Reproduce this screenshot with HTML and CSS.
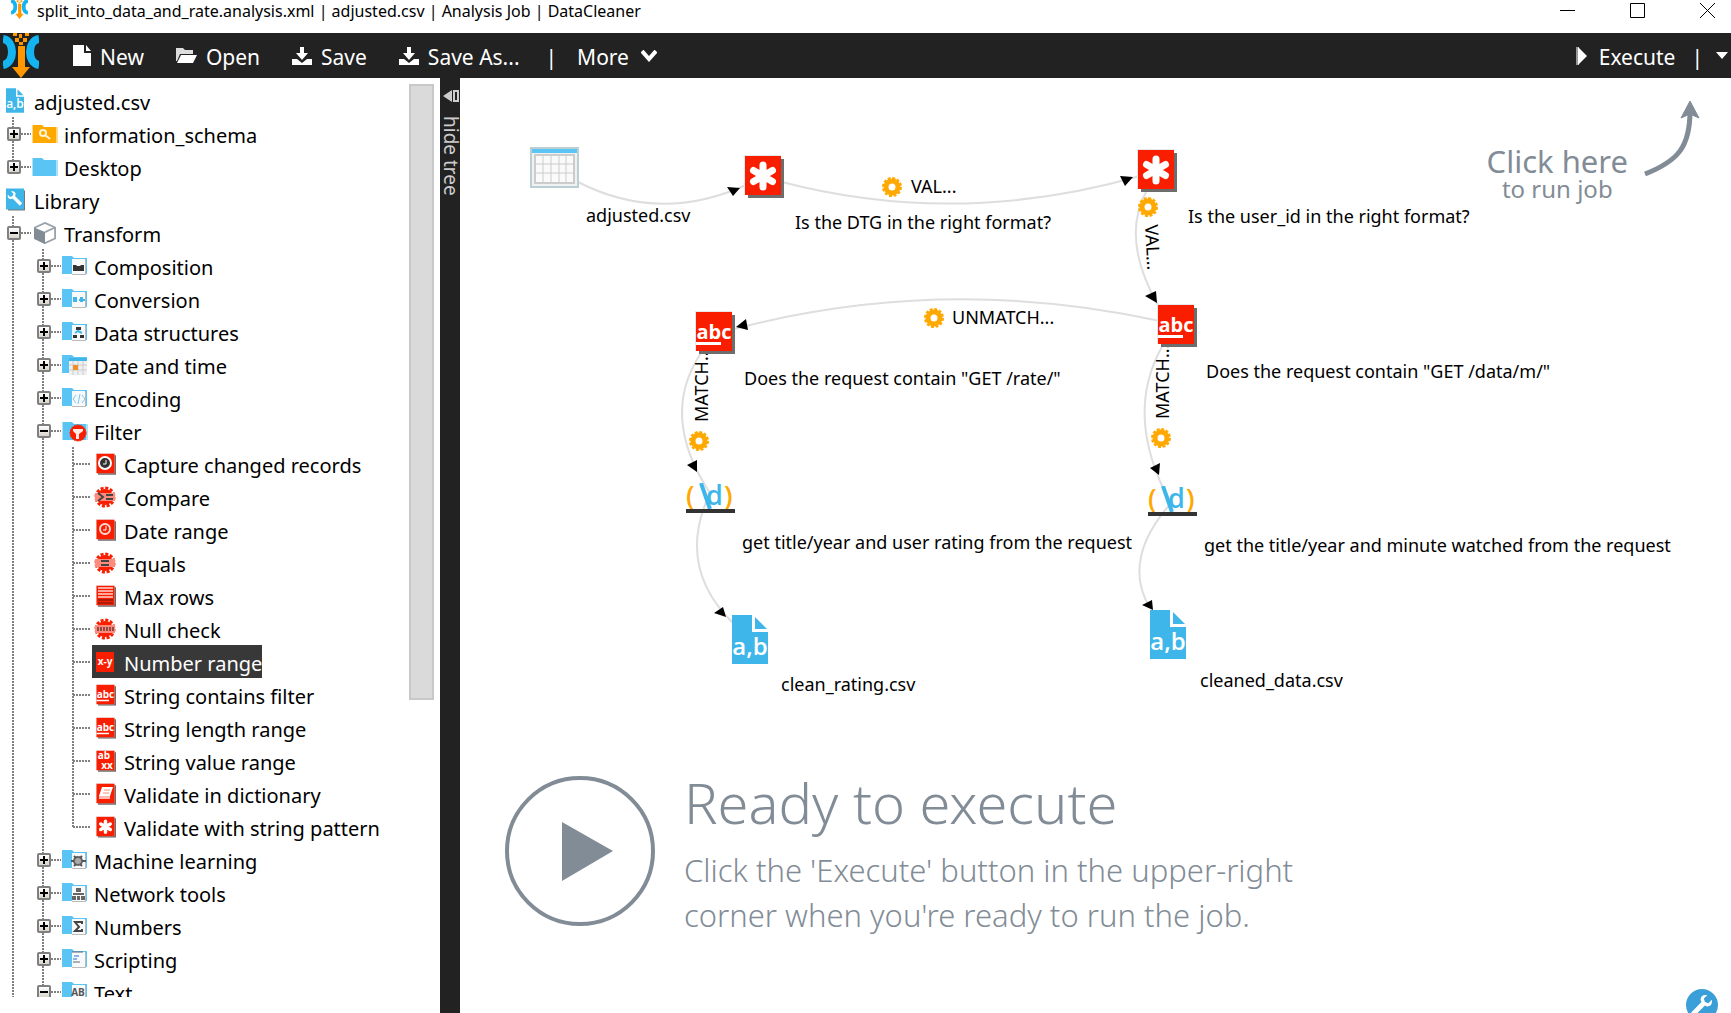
FILE: index.html
```
<!DOCTYPE html>
<html lang="en">
<head>
<meta charset="utf-8">
<title>split_into_data_and_rate.analysis.xml | adjusted.csv | Analysis Job | DataCleaner</title>
<link rel="stylesheet" href="styles.css">
</head>
<body>
<svg class="sprite" aria-hidden="true">
  <symbol id="logo" viewBox="0 0 36 45">
    <path d="M0 6c12 2 12 24 0 26M36 6c-12 2-12 24 0 26" fill="none" stroke="#14b4f0" stroke-width="8"/>
    <path d="M15 13h7v21h5l-9 11-9-11h6zM10 0h4v3h-4zM16 1h3v4h-3zM22 0h4v3h-4zM12 5h4v4h-4zM20 5h4v4h-4zM16 9h4v3h-4z" fill="#ff9800"/>
  </symbol>
  <symbol id="folder" viewBox="0 0 26 20">
    <path d="M1 1h9l2 2h13v16H1z" fill="#5ac5f4"/><path d="M24 3h2v16h-2zM0 1h1v18H0z" fill="#aee0f7"/>
  </symbol>
  <symbol id="tile" viewBox="0 0 40 43">
    <path d="M4 4h36v39H4z" fill="#6d6d6d"/><path d="M0 0h37v40H0z" fill="#e6e9ec"/><path d="M1 1h36v39H1z" fill="#fa1e00"/>
  </symbol>
  <symbol id="tile-star" viewBox="0 0 40 43">
    <use href="#tile"/>
    <path d="M19 10v22M9.500 15.500l19 11M28.500 15.500l-19 11" stroke="#fff" stroke-width="7" stroke-linecap="round"/>
  </symbol>
  <symbol id="tile-abc" viewBox="0 0 40 43">
    <use href="#tile"/>
    <text x="19" y="28" text-anchor="middle" class="abc">abc</text>
    <path d="M1 31h25v3H1z" fill="#fff"/>
  </symbol>
  <symbol id="csv" viewBox="0 0 36 49">
    <path d="M0 0h20v17h16v32H0z" fill="#3fb6ea"/><path d="M23 2v12h12z" fill="#3fb6ea"/>
    <text x="18" y="40" text-anchor="middle" class="csv-text">a,b</text>
  </symbol>
  <symbol id="gear" viewBox="-10 -10 20 20">
    <circle r="6" fill="none" stroke="#ffa800" stroke-width="5"/>
    <circle r="9" fill="none" stroke="#ffa800" stroke-width="2" stroke-dasharray="3 1.710"/>
  </symbol>
  <symbol id="badge" viewBox="0 0 22 22">
    <circle cx="11" cy="11" r="8" fill="#fa1e00"/>
    <circle cx="11" cy="11" r="9" fill="none" stroke="#fa1e00" stroke-width="3" stroke-dasharray="3 1.710"/>
    <path d="M1 7h20v8H1z" fill="#ff8b7d"/>
  </symbol>
  <symbol id="sheet" viewBox="0 0 26 22">
    <path d="M0 1h10l2 2h13v16H0z" fill="#5ac5f4"/><path d="M10 5h14v15H10z" fill="#bbb"/><path d="M10 4h13v15H10z" fill="#f7f9fa"/>
  </symbol>
  <symbol id="regex" viewBox="0 0 49 30">
    <text y="22" class="regex-text"><tspan x="0" fill="#ffa800">(</tspan><tspan x="20" fill="#3fb6ea">d</tspan><tspan x="38" fill="#ffa800">)</tspan></text>
    <path d="M15 0l9 26" stroke="#3fb6ea" stroke-width="4"/><path d="M0 26h49v4H0z" fill="#333"/>
  </symbol>
  <symbol id="save" viewBox="0 0 20 18">
    <path d="M8 0h4v6h4l-6 7-6-7h4z" fill="#fff"/><path d="M0 12h5l5 4 5-4h5v6H0z" fill="#fff"/>
  </symbol>
  <symbol id="wrench" viewBox="0 0 20 20">
    <path d="M1 5l3 3 3-1 1-3-3-3c5-1 7 3 5 6l9 9-3 3-9-9c-3 2-7 0-6-5z" fill="#fff"/>
  </symbol>
</svg>

<header class="titlebar">
  <svg class="titlebar-logo" width="17" height="21"><use href="#logo"/></svg>
  <h1>split_into_data_and_rate.analysis.xml | adjusted.csv | Analysis Job | DataCleaner</h1>
  <div class="window-controls">
    <button aria-label="Minimize"><svg width="16" height="16"><path d="M0 7h15v1H0z"/></svg></button>
    <button aria-label="Maximize"><svg width="16" height="16"><path d="M.5.5h14v14H.5z" fill="none" stroke="#000"/></svg></button>
    <button aria-label="Close"><svg width="16" height="16"><path d="M0 0l15 15M15 0L0 15" stroke="#000"/></svg></button>
  </div>
</header>

<nav class="toolbar" aria-label="Job">
  <svg class="toolbar-logo" width="36" height="45"><use href="#logo"/></svg>
  <button><svg width="18" height="21"><path d="M0 0h11v8h7v13H0zM13 0l5 6h-5z" fill="#fff"/></svg>New</button>
  <button><svg width="21" height="16"><path d="M0 0h7l2 2h8v4H4L1 13H0z" fill="#ddd"/><path d="M5 7h16l-4 8H1z" fill="#fff"/></svg>Open</button>
  <button><svg width="20" height="18"><use href="#save"/></svg>Save</button>
  <button class="save-as"><svg width="20" height="18"><use href="#save"/></svg>Save As...</button>
  <span class="bar">|</span>
  <button class="more">More<svg width="16" height="12"><path d="M1 1l7 8 7-8" fill="none" stroke="#fff" stroke-width="4"/></svg></button>
  <button class="execute"><svg width="14" height="18"><path d="M0 0h3v18H0z" fill="#999"/><path d="M2 0l9 9-9 9z" fill="#fff"/></svg>Execute</button>
  <span class="bar">|</span>
  <button aria-label="Execution options"><svg width="14" height="9"><path d="M1 1h12L7 8z" fill="#fff"/></svg></button>
</nav>

<main class="workspace">
  <aside class="sidebar">
    <ul class="tree">
      <li><div class="row root"><span class="node"><svg class="icon" viewBox="-4 0 26 25"><use href="#csv" width="18" height="25"/></svg>adjusted.csv</span></div>
        <ul class="ends">
          <li><div class="row"><button class="toggle" aria-label="Expand"></button><span class="node"><svg class="icon" viewBox="0 0 26 20"><path d="M1 1h9l2 2h13v16H1z" fill="#ffa800"/><path d="M24 3h2v16h-2zM0 1h1v18H0z" fill="#ffd98a"/><circle cx="11" cy="9" r="3" fill="none" stroke="#fff3d6" stroke-width="2"/><path d="M13 11l5 4" stroke="#fff3d6" stroke-width="2"/></svg>information_schema</span></div></li>
          <li><div class="row"><button class="toggle" aria-label="Expand"></button><span class="node"><svg class="icon" viewBox="0 0 26 20"><use href="#folder"/></svg>Desktop</span></div></li>
        </ul>
      </li>
      <li><div class="row root"><span class="node"><svg class="icon" viewBox="-4 0 26 22"><path d="M2 2h17v20H2z" fill="#777"/><path d="M0 0h18v21H0z" fill="#3fb6ea"/><use href="#wrench" x="1" y="2" width="16" height="16"/></svg>Library</span></div>
        <ul>
          <li><div class="row"><button class="toggle open" aria-label="Collapse"></button><span class="node"><svg class="icon" viewBox="0 0 26 24"><path d="M13 1l11 5v12l-11 5-11-5V6z" fill="#fff" stroke="#9aa3ab" stroke-width="2"/><path d="M1 6l12 5v13L1 18z" fill="#828c96"/><path d="M13 11l11-5" stroke="#9aa3ab" stroke-width="2"/></svg>Transform</span></div>
            <ul>
              <li><div class="row"><button class="toggle" aria-label="Expand"></button><span class="node"><svg class="icon" viewBox="0 0 26 22"><use href="#sheet"/><path d="M11 10h3l1 1h3l1-1h3v6H11z" fill="#333"/></svg>Composition</span></div></li>
              <li><div class="row"><button class="toggle" aria-label="Expand"></button><span class="node"><svg class="icon" viewBox="0 0 26 22"><use href="#sheet"/><path d="M11 9h4v5h-4zM17 11h6v2h-6zM18 9h3v5h-3z" fill="#3fb6ea"/></svg>Conversion</span></div></li>
              <li><div class="row"><button class="toggle" aria-label="Expand"></button><span class="node"><svg class="icon" viewBox="0 0 26 22"><use href="#sheet"/><path d="M14 6h5v3h-5zM11 14h4v3h-4zM18 14h4v3h-4z" fill="#333"/><path d="M13 12l3-2 4 2" fill="none" stroke="#3fb6ea" stroke-width="2"/></svg>Data structures</span></div></li>
              <li><div class="row"><button class="toggle" aria-label="Expand"></button><span class="node"><svg class="icon" viewBox="0 0 26 22"><path d="M0 1h10l2 2h13v4H7v12H0z" fill="#5ac5f4"/><path d="M7 7h18v14H7z" fill="#f0f0f0"/><path d="M7 4h18v3H7z" fill="#3fb6ea"/><path d="M11 7v14M16 7v14M21 7v14M7 11h18M7 16h18" stroke="#ccc"/><path d="M11 11h5v5h-5z" fill="#ee8f28"/></svg>Date and time</span></div></li>
              <li><div class="row"><button class="toggle" aria-label="Expand"></button><span class="node"><svg class="icon" viewBox="0 0 26 22"><use href="#sheet"/><path d="M14 8l-3 4 3 4M20 8l3 4-3 4M18 7l-2 10" fill="none" stroke="#7cc8ec"/></svg>Encoding</span></div></li>
              <li><div class="row"><button class="toggle open" aria-label="Collapse"></button><span class="node"><svg class="icon" viewBox="0 0 26 22"><use href="#folder"/><circle cx="16" cy="13" r="8" fill="#fa1e00" stroke="#fa1e00" stroke-dasharray="2 1"/><path d="M11 9h10v2l-4 3v5h-3v-5l-3-3z" fill="#ffe9e6"/></svg>Filter</span></div>
                <ul class="leaves ends">
                  <li><div class="row"><span class="node"><svg class="icon" viewBox="-4 0 26 22"><use href="#tile" width="20" height="22"/><circle cx="9" cy="10" r="6" fill="#333" stroke="#fff" stroke-width="2"/><path d="M10 7v4H7" stroke="#fff" fill="none"/></svg>Capture changed records</span></div></li>
                  <li><div class="row"><span class="node"><svg class="icon" viewBox="-2 0 26 22"><use href="#badge" width="22" height="22"/><path d="M4 7l5 4-5 4M12 9h7M12 13h7" fill="none" stroke="#444" stroke-width="2"/></svg>Compare</span></div></li>
                  <li><div class="row"><span class="node"><svg class="icon" viewBox="-4 0 26 22"><use href="#tile" width="20" height="22"/><circle cx="9" cy="10" r="5" fill="none" stroke="#ffd9d4" stroke-width="2"/><path d="M10 7v4H7" stroke="#fff" fill="none"/></svg>Date range</span></div></li>
                  <li><div class="row"><span class="node"><svg class="icon" viewBox="-2 0 26 22"><use href="#badge" width="22" height="22"/><path d="M7 9h8M7 13h8" stroke="#444" stroke-width="2"/></svg>Equals</span></div></li>
                  <li><div class="row"><span class="node"><svg class="icon" viewBox="-4 0 26 22"><use href="#tile" width="20" height="22"/><path d="M2 3h15M2 6h15M2 9h15M2 12h15" stroke="#ffa79c" stroke-width="2"/><path d="M2 15h15M2 18h15" stroke="#5c1a12"/></svg>Max rows</span></div></li>
                  <li><div class="row"><span class="node"><svg class="icon" viewBox="-2 0 26 22"><use href="#badge" width="22" height="22"/><path d="M3 11h17" stroke="#8f4a42" stroke-width="4" stroke-dasharray="2 1"/></svg>Null check</span></div></li>
                  <li><div class="row"><span class="node selected" aria-selected="true"><svg class="icon" viewBox="-4 0 26 22"><path d="M0 1h18v20H0z" fill="#fa1e00"/><text x="9" y="14" text-anchor="middle" class="mini">x-y</text></svg>Number range</span></div></li>
                  <li><div class="row"><span class="node"><svg class="icon" viewBox="-4 0 26 22"><use href="#tile-abc" width="20" height="22"/></svg>String contains filter</span></div></li>
                  <li><div class="row"><span class="node"><svg class="icon" viewBox="-4 0 26 22"><use href="#tile-abc" width="20" height="22"/></svg>String length range</span></div></li>
                  <li><div class="row"><span class="node"><svg class="icon" viewBox="-4 0 26 22"><use href="#tile" width="20" height="22"/><text x="8" y="9" text-anchor="middle" class="mini">ab</text><text x="11" y="19" text-anchor="middle" class="mini">xx</text></svg>String value range</span></div></li>
                  <li><div class="row"><span class="node"><svg class="icon" viewBox="-4 0 26 22"><use href="#tile" width="20" height="22"/><path d="M6 4h11l-3 9H3z" fill="#fff"/><path d="M3 13h11v3H3z" fill="#ffb9b0"/><path d="M8 7h6M7 10h6" stroke="#fa8a7d"/></svg>Validate in dictionary</span></div></li>
                  <li><div class="row"><span class="node"><svg class="icon" viewBox="-4 0 26 22"><use href="#tile-star" width="20" height="22"/></svg>Validate with string pattern</span></div></li>
                </ul>
              </li>
              <li><div class="row"><button class="toggle" aria-label="Expand"></button><span class="node"><svg class="icon" viewBox="0 0 26 22"><use href="#sheet"/><circle cx="16" cy="12" r="4" fill="#aaa" stroke="#666" stroke-width="2"/><path d="M9 12h3M20 12h4M12 7l2 2M20 7l-2 2M12 17l2-2M20 17l-2-2" stroke="#555" stroke-width="2"/></svg>Machine learning</span></div></li>
              <li><div class="row"><button class="toggle" aria-label="Expand"></button><span class="node"><svg class="icon" viewBox="0 0 26 22"><use href="#sheet"/><path d="M14 6h5v4h-5zM10 14h4v4h-4zM15 14h3v4h-3zM19 14h4v4h-4zM11 11h11v2H11z" fill="#666"/></svg>Network tools</span></div></li>
              <li><div class="row"><button class="toggle" aria-label="Expand"></button><span class="node"><svg class="icon" viewBox="0 0 26 22"><use href="#sheet"/><path d="M20 9V7h-7l4 5-4 4h7v-2" fill="none" stroke="#444" stroke-width="2"/></svg>Numbers</span></div></li>
              <li><div class="row"><button class="toggle" aria-label="Expand"></button><span class="node"><svg class="icon" viewBox="0 0 26 22"><use href="#sheet"/><path d="M10 4h11M11 14h7" stroke="#666"/><path d="M12 8h5M11 11h4" stroke="#8ab4e8" stroke-width="2"/></svg>Scripting</span></div></li>
              <li><div class="row"><button class="toggle open" aria-label="Collapse"></button><span class="node"><svg class="icon" viewBox="0 0 26 22"><use href="#sheet"/><text x="16" y="15" text-anchor="middle" class="mini dark">AB</text></svg>Text</span></div></li>
            </ul>
          </li>
        </ul>
      </li>
    </ul>
    <div class="scroll-thumb"></div>
  </aside>

  <button class="hide-tree"><svg width="16" height="12"><path d="M9 0v12L0 6z" fill="#ccc"/><path d="M11 1h4v10h-4z" fill="none" stroke="#ccc" stroke-width="2"/></svg><span>hide tree</span></button>

  <section class="canvas">
    <div class="graph">
      <svg class="edges" aria-hidden="true">
        <g transform="translate(-460 -78)">
          <g fill="none" stroke="#dedede" stroke-width="2">
            <path d="M578 182Q660 224 746 185"/>
            <path d="M782 182Q958 228 1140 176"/>
            <path d="M1147 190Q1120 238 1158 305"/>
            <path d="M1160 321Q945 274 734 329"/>
            <path d="M701 353Q659 416 710 493"/>
            <path d="M1163 345Q1123 414 1170 502"/>
            <path d="M710 493Q675 567 734 624"/>
            <path d="M1171 503Q1121 560 1150 608"/>
          </g>
          <path d="M727 187L740 188L733 196zM1120 176L1133 177L1125 186zM1145 296L1156 291L1157 303zM736 327L746 319L748 330zM687 465L697 460V472zM1150 468L1160 463L1159 475zM714 613L723 607L726 617zM1142 605L1152 600L1153 610z"/>
          <text class="edge-label" x="911" y="193">VAL...</text>
          <text class="edge-label" x="952" y="324">UNMATCH...</text>
          <text class="edge-label" transform="translate(1145 225) rotate(87)">VAL...</text>
          <text class="edge-label" transform="translate(708 422) rotate(-90)">MATCH...</text>
          <text class="edge-label" transform="translate(1169 419) rotate(-90)">MATCH...</text>
          <use href="#gear" x="882" y="177" width="20" height="20"/>
          <use href="#gear" x="1138" y="197" width="20" height="20"/>
          <use href="#gear" x="924" y="308" width="20" height="20"/>
          <use href="#gear" x="689" y="431" width="20" height="20"/>
          <use href="#gear" x="1151" y="428" width="20" height="20"/>
          <g>
            <path d="M530 147h49v41h-49z" fill="#b9cfd1"/><path d="M532 149h45v37h-45z" fill="#f1f1f1"/><path d="M532 149h45v4h-45z" fill="#5ac5f4"/>
            <path d="M535 155h39v28h-39z" fill="#fafafa" stroke="#ccc" stroke-width="2"/><path d="M543 155v28M551 155v28M559 155v28M566 155v28M535 164h39M535 173h39" stroke="#ccc" stroke-width="1"/>
          </g>
          <use href="#tile-star" x="744" y="155" width="40" height="43"/>
          <use href="#tile-star" x="1137" y="149" width="40" height="43"/>
          <use href="#tile-abc" x="1157" y="304" width="40" height="43"/>
          <use href="#tile-abc" x="695" y="311" width="40" height="43"/>
          <use href="#regex" x="686" y="483" width="49" height="30"/>
          <use href="#regex" x="1148" y="486" width="49" height="30"/>
          <use href="#csv" x="732" y="615" width="36" height="49"/>
          <use href="#csv" x="1150" y="610" width="36" height="49"/>
        </g>
      </svg>
      <span class="label" style="left:126px;top:127px">adjusted.csv</span>
      <span class="label" style="left:335px;top:134px">Is the DTG in the right format?</span>
      <span class="label" style="left:728px;top:128px">Is the user_id in the right format?</span>
      <span class="label" style="left:746px;top:283px">Does the request contain "GET /data/m/"</span>
      <span class="label" style="left:284px;top:290px">Does the request contain "GET /rate/"</span>
      <span class="label" style="left:282px;top:454px">get title/year and user rating from the request</span>
      <span class="label" style="left:744px;top:457px">get the title/year and minute watched from the request</span>
      <span class="label" style="left:321px;top:596px">clean_rating.csv</span>
      <span class="label" style="left:740px;top:592px">cleaned_data.csv</span>
      <div class="hint">
        <p>Click here<small>to run job</small></p>
        <svg width="58" height="78" aria-hidden="true"><path d="M3 73C36 60 48 46 48 10" fill="none" stroke="#828c96" stroke-width="5"/><path d="M48 0l9 17-9-4-9 4z" fill="#828c96" stroke="#828c96"/></svg>
      </div>
    </div>
    <div class="ready">
      <svg width="152" height="152" aria-hidden="true"><circle cx="76" cy="76" r="73" fill="none" stroke="#828c96" stroke-width="4"/><path d="M58 47l51 29-51 30z" fill="#828c96"/></svg>
      <div>
        <h2>Ready to execute</h2>
        <p>Click the 'Execute' button in the upper-right<br>corner when you're ready to run the job.</p>
      </div>
    </div>
    <button class="settings" aria-label="Settings"><svg width="32" height="32"><circle cx="16" cy="16" r="16" fill="#3a9fd8"/><g transform="matrix(-1 0 0 1 32 0)"><use href="#wrench" x="5" y="5" width="23" height="23"/></g></svg></button>
  </section>
</main>
</body>
</html>
```
FILE: styles.css
```
* { box-sizing: border-box; }

body {
  margin: 0;
  height: 100vh;
  overflow: hidden;
  display: flex;
  flex-direction: column;
  background: #fff;
  color: #000;
  font-family: "Noto Sans", "Open Sans", sans-serif;
  font-size: 20px;
}

h1, h2, p, ul { margin: 0; padding: 0; font-weight: 400; }
ul { list-style: none; }

button {
  border: 0;
  padding: 0;
  background: none;
  color: inherit;
  font: inherit;
}

svg { flex: none; }
.sprite { display: none; }

.abc { font: 700 20px "Open Sans", sans-serif; fill: #fff; }
.csv-text { font: 600 24px "Open Sans", sans-serif; fill: #fff; }
.regex-text { font: 600 27px "Open Sans", sans-serif; }
.mini { font: 700 10px "Open Sans", sans-serif; fill: #fff; }
.mini.dark { fill: #555; }

/* Window title */
.titlebar {
  flex: none;
  height: 33px;
  display: flex;
  align-items: flex-start;
  padding: 0 15px 0 11px;
  overflow: hidden;
}
.titlebar-logo { margin-top: -2px; }
.titlebar h1 { flex: 1; margin-left: 9px; font-size: 16px; line-height: 22px; white-space: nowrap; }
.window-controls { display: flex; gap: 54px; padding-top: 3px; }
.window-controls svg { display: block; }

/* Toolbar */
.toolbar {
  flex: none;
  height: 45px;
  display: flex;
  align-items: center;
  padding: 0 2px 0 3px;
  background: #222;
  color: #fff;
  font-size: 21px;
  line-height: 48px;
}
.toolbar button { display: flex; gap: 9px; height: 45px; margin-right: 32px; white-space: nowrap; }
.toolbar button svg { align-self: center; }
.toolbar-logo { margin-right: 34px; }
.toolbar .bar { height: 45px; margin-right: 20px; }
.toolbar .save-as { margin-right: 26px; }
.toolbar .more { gap: 12px; }
.toolbar .execute { margin-left: auto; margin-right: 16px; }
.toolbar .execute + .bar { margin-right: 12px; }
.toolbar button:last-child { margin-right: 0; }

/* Tree */
.workspace { flex: 1; min-height: 0; display: flex; }
.sidebar { flex: none; width: 440px; display: flex; padding: 6px 6px 16px 0; }
.tree { flex: 1; overflow: hidden; }
.tree ul {
  background: repeating-linear-gradient(#808080 0 2px, #fff 2px 3px) 12px 0 / 2px 100% no-repeat;
}
.tree ul.ends { background-size: 2px calc(100% - 16px); }
.tree ul ul { margin-left: 30px; }
.row { height: 33px; display: flex; align-items: center; padding-left: 7px; }
.row.root { padding-left: 2px; }
.toggle {
  width: 14px;
  height: 14px;
  border: 2px solid #7f7f7f;
  border-radius: 2px;
  background:
    linear-gradient(#000, #000) center / 8px 2px no-repeat,
    linear-gradient(#000, #000) center / 2px 8px no-repeat,
    linear-gradient(#fff, #d8d4cc);
}
.toggle.open {
  background:
    linear-gradient(#000, #000) center / 8px 2px no-repeat,
    linear-gradient(#fff, #d8d4cc);
}
.toggle::after {
  content: "";
  display: block;
  width: 10px;
  height: 2px;
  margin-left: 12px;
  background: repeating-linear-gradient(90deg, #808080 0 2px, #fff 2px 3px);
}
.toggle + .node { margin-left: 11px; }
.leaves .row::before {
  content: "";
  width: 18px;
  height: 2px;
  margin: 0 1px 0 6px;
  background: repeating-linear-gradient(90deg, #808080 0 2px, #fff 2px 3px);
}
.node { display: flex; gap: 6px; height: 33px; line-height: 38px; white-space: nowrap; }
.node.selected { background: #383838; color: #fff; }
.icon { align-self: center; width: 26px; height: 22px; }
.root .icon { height: 25px; }
.scroll-thumb {
  flex: none;
  width: 25px;
  height: 616px;
  border: 2px solid #c8c8c8;
  background: #dadada;
}

.hide-tree {
  flex: none;
  width: 20px;
  display: flex;
  flex-direction: column;
  align-items: center;
  gap: 14px;
  padding: 12px 0 0 2px;
  background: #222;
  color: #ccc;
  font-size: 19px;
  line-height: 18px;
}
.hide-tree span { writing-mode: vertical-rl; }

/* Job graph */
.canvas { flex: 1; min-width: 0; position: relative; overflow: hidden; }
.graph { position: relative; height: 697px; }
.edges { position: absolute; inset: 0; width: 100%; height: 100%; }
.label { position: absolute; font-size: 18px; line-height: 20px; white-space: nowrap; }
.edge-label { font-size: 18px; }
.hint {
  position: absolute;
  top: 23px;
  right: 31px;
  display: flex;
  gap: 14px;
  color: #828c96;
  font-weight: 300;
}
.hint p { padding-top: 42px; font-size: 31px; line-height: 36px; text-align: center; }
.hint small { display: block; font-size: 24px; line-height: 20px; }

.ready { display: flex; gap: 28px; padding-left: 44px; color: #828c96; font-weight: 300; }
.ready h2 { font-size: 56px; line-height: 54px; font-weight: 300; white-space: nowrap; }
.ready p { padding-top: 19px; font-size: 31px; line-height: 45px; font-weight: 300; white-space: nowrap; }
.settings { position: absolute; right: 13px; bottom: -8px; }
.settings svg { display: block; }
```
